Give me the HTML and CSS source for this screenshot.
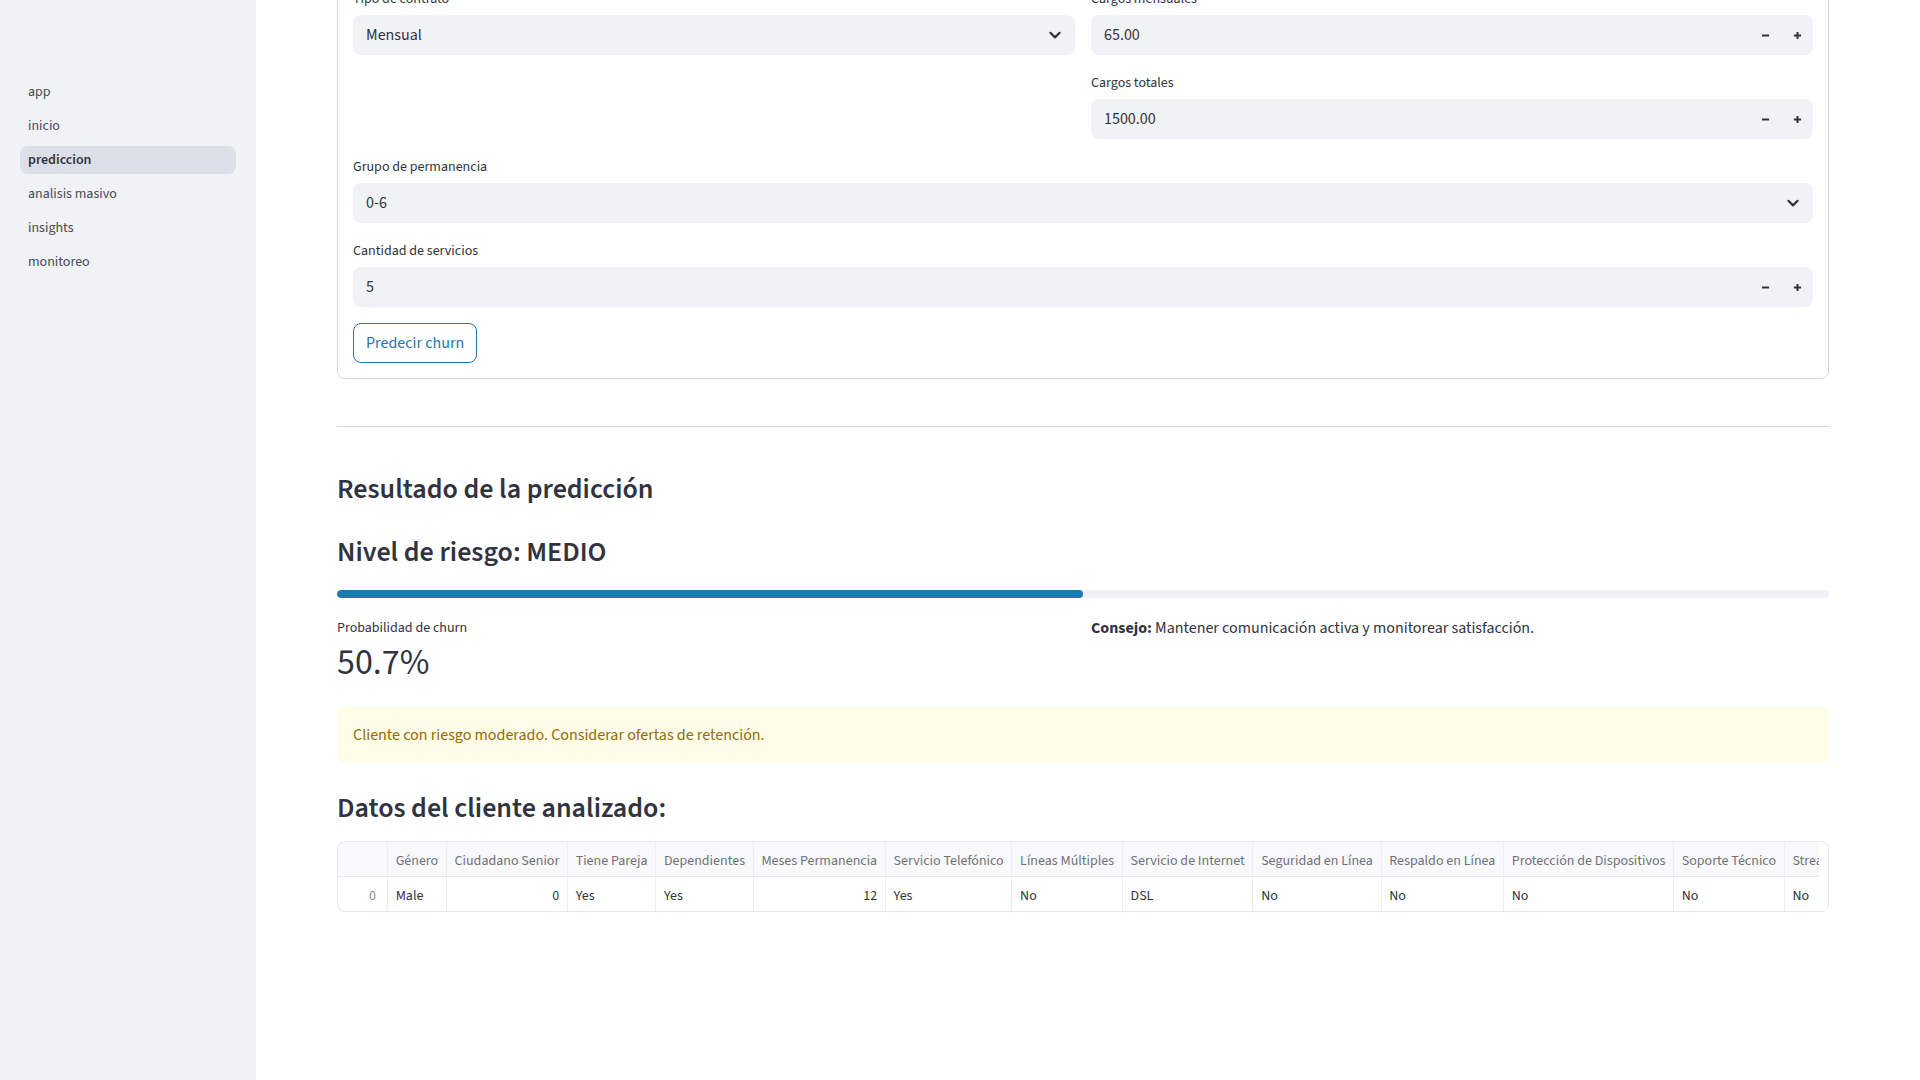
FILE: index.html
```html
<!DOCTYPE html>
<html lang="es">
<head>
<meta charset="utf-8">
<title>prediccion</title>
<link rel="stylesheet" href="styles.css">
</head>
<body>
<div class="app">
  <aside class="sidebar">
    <nav class="nav">
      <a class="nav-item">app</a>
      <a class="nav-item">inicio</a>
      <a class="nav-item active">prediccion</a>
      <a class="nav-item">analisis masivo</a>
      <a class="nav-item">insights</a>
      <a class="nav-item">monitoreo</a>
    </nav>
  </aside>
  <main class="main">
    <div class="content">
      <form class="form">
        <div class="cols">
          <div class="col">
            <div class="field">
              <label class="label">Tipo de contrato</label>
              <div class="control select">
                <span class="value">Mensual</span>
                <svg class="chev" viewBox="0 0 20 20"><path d="M5.4 7.8 L10 12.4 L14.6 7.8" /></svg>
              </div>
            </div>
          </div>
          <div class="col">
            <div class="field">
              <label class="label">Cargos mensuales</label>
              <div class="control number">
                <span class="value">65.00</span>
                <span class="step"><svg viewBox="0 0 10 10"><path d="M1 5 H9"/></svg></span>
                <span class="step"><svg viewBox="0 0 10 10"><path d="M1 5 H9 M5 1 V9"/></svg></span>
              </div>
            </div>
            <div class="field">
              <label class="label">Cargos totales</label>
              <div class="control number">
                <span class="value">1500.00</span>
                <span class="step"><svg viewBox="0 0 10 10"><path d="M1 5 H9"/></svg></span>
                <span class="step"><svg viewBox="0 0 10 10"><path d="M1 5 H9 M5 1 V9"/></svg></span>
              </div>
            </div>
          </div>
        </div>
        <div class="field">
          <label class="label">Grupo de permanencia</label>
          <div class="control select">
            <span class="value">0-6</span>
            <svg class="chev" viewBox="0 0 20 20"><path d="M5.4 7.8 L10 12.4 L14.6 7.8" /></svg>
          </div>
        </div>
        <div class="field">
          <label class="label">Cantidad de servicios</label>
          <div class="control number">
            <span class="value">5</span>
            <span class="step"><svg viewBox="0 0 10 10"><path d="M1 5 H9"/></svg></span>
            <span class="step"><svg viewBox="0 0 10 10"><path d="M1 5 H9 M5 1 V9"/></svg></span>
          </div>
        </div>
        <div class="actions">
          <button type="button" class="btn">Predecir churn</button>
        </div>
      </form>

      <hr class="divider">

      <h3 class="h3 h-result">Resultado de la predicción</h3>
      <h3 class="h3 h-risk">Nivel de riesgo: MEDIO</h3>

      <div class="progress"><div class="progress-fill" style="width:50%"></div></div>

      <div class="cols result-cols">
        <div class="metric">
          <div class="metric-label">Probabilidad de churn</div>
          <div class="metric-value">50.7%</div>
        </div>
        <p class="advice"><strong>Consejo:</strong> Mantener comunicación activa y monitorear satisfacción.</p>
      </div>

      <div class="alert">Cliente con riesgo moderado. Considerar ofertas de retención.</div>

      <h3 class="h3 h-data">Datos del cliente analizado:</h3>

      <div class="grid">
        <div class="grid-clip">
          <table class="table">
            <thead>
              <tr>
                <th class="idx"></th>
                <th>Género</th>
                <th>Ciudadano Senior</th>
                <th>Tiene Pareja</th>
                <th>Dependientes</th>
                <th>Meses Permanencia</th>
                <th>Servicio Telefónico</th>
                <th>Líneas Múltiples</th>
                <th>Servicio de Internet</th>
                <th>Seguridad en Línea</th>
                <th>Respaldo en Línea</th>
                <th>Protección de Dispositivos</th>
                <th>Soporte Técnico</th>
                <th>Streaming TV</th>
              </tr>
            </thead>
            <tbody>
              <tr>
                <td class="idx num">0</td>
                <td>Male</td>
                <td class="num">0</td>
                <td>Yes</td>
                <td>Yes</td>
                <td class="num">12</td>
                <td>Yes</td>
                <td>No</td>
                <td>DSL</td>
                <td>No</td>
                <td>No</td>
                <td>No</td>
                <td>No</td>
                <td>No</td>
              </tr>
            </tbody>
          </table>
        </div>
      </div>
    </div>
  </main>
</div>
</body>
</html>
```

FILE: styles.css
```css
* { box-sizing: border-box; }

html, body {
  margin: 0;
  padding: 0;
  height: 100%;
  overflow: hidden;
  background: #ffffff;
  color: #31333f;
  font-family: "Source Sans Pro", "Source Sans 3", Lato, "Noto Sans", sans-serif;
}

.app {
  display: flex;
  height: 1080px;
}

/* Sidebar */
.sidebar {
  width: 256px;
  flex: 0 0 256px;
  background: #f0f2f6;
}

.nav {
  display: flex;
  flex-direction: column;
  gap: 6px;
  padding: 78px 20px 0 20px;
}

.nav-item {
  display: flex;
  align-items: center;
  height: 28px;
  padding: 0 8px;
  border-radius: 8px;
  font-size: 14px;
  color: #474a54;
  text-decoration: none;
}

.nav-item.active {
  background: #dadfe8;
  color: #31333f;
  font-weight: 600;
}

/* Main */
.main {
  flex: 1;
  padding: 0 91px 0 81px;
  min-width: 0;
}

.content {
  display: flex;
  flex-direction: column;
  margin-top: -29px;
}

/* Form */
.form {
  display: flex;
  flex-direction: column;
  gap: 16px;
  border: 1px solid rgba(49, 51, 63, 0.2);
  border-radius: 8px;
  padding: 15px;
}

.cols {
  display: grid;
  grid-template-columns: 1fr 1fr;
  gap: 16px;
}

.col {
  display: flex;
  flex-direction: column;
  gap: 16px;
  min-width: 0;
}

.field {
  display: flex;
  flex-direction: column;
}

.label {
  display: flex;
  align-items: center;
  height: 24px;
  margin-bottom: 4px;
  font-size: 14px;
  color: #31333f;
}

.control {
  display: flex;
  align-items: center;
  height: 40px;
  background: #f0f2f6;
  border-radius: 8px;
  font-size: 16px;
  color: #31333f;
}

.control .value {
  flex: 1;
  padding-left: 13px;
}

.select {
  padding-right: 10px;
}

.chev {
  width: 20px;
  height: 20px;
  fill: none;
  stroke: #31333f;
  stroke-width: 2.2;
  stroke-linecap: round;
  stroke-linejoin: round;
}

.step {
  display: flex;
  align-items: center;
  justify-content: center;
  width: 32px;
  height: 40px;
}

.step svg {
  width: 9px;
  height: 9px;
  fill: none;
  stroke: #31333f;
  stroke-width: 2.2;
}

.actions {
  display: flex;
}

.btn {
  height: 40px;
  padding: 0 12px;
  background: #ffffff;
  border: 1px solid #2a73ad;
  border-radius: 8px;
  color: #2a73ad;
  font-family: inherit;
  font-size: 16px;
}

/* Divider */
.divider {
  margin: 47px 0 0 0;
  border: none;
  border-top: 1px solid rgba(49, 51, 63, 0.2);
  height: 0;
}

/* Headings */
.h3 {
  margin: 0;
  font-size: 28px;
  line-height: 1.2;
  font-weight: 600;
  color: #31333f;
}

.h-result { margin-top: 46px; }
.h-risk { margin-top: 29px; }
.h-data { margin-top: 29px; }

/* Progress */
.progress {
  margin-top: 21px;
  height: 8px;
  border-radius: 8px;
  background: #f0f2f6;
  overflow: hidden;
}

.progress-fill {
  height: 100%;
  background: #1f77b4;
  border-radius: 8px;
}

/* Metric + advice */
.result-cols {
  margin-top: 20px;
}

.metric-label {
  font-size: 14px;
  line-height: 20px;
  color: #31333f;
}

.metric-value {
  margin-top: 3px;
  font-size: 36px;
  line-height: 1.2;
  color: #31333f;
}

.advice {
  margin: -2px 0 0 0;
  font-size: 16px;
  line-height: 1.6;
}

.advice strong { font-weight: 700; }

/* Alert */
.alert {
  margin-top: 23px;
  padding: 16px;
  font-size: 16px;
  line-height: 24px;
  border-radius: 8px;
  background: #fffce7;
  color: #926c05;
}

/* Data grid */
.grid {
  margin-top: 15px;
  border: 1px solid #e6e7ea;
  border-radius: 8px;
  overflow: hidden;
  background: #ffffff;
}

.grid-clip {
  overflow: hidden;
  margin-right: 9px;
}

.table {
  border-collapse: separate;
  border-spacing: 0;
  font-size: 14px;
  white-space: nowrap;
}

.table th,
.table td {
  height: 34px;
  padding: 4px 7.7px 0 7.7px;
  border-right: 1px solid #eeeef1;
  text-align: left;
  font-weight: 400;
}

.table th {
  background: #f9f9fb;
  color: #6f717a;
  border-bottom: 1px solid #e6e7ea;
  height: 35px;
}

.table td {
  color: #31333f;
}

.table .num {
  text-align: right;
}

.table .idx {
  width: 50px;
  min-width: 50px;
  padding-right: 11px;
}

.table td.idx {
  color: #8a8c93;
}
```
